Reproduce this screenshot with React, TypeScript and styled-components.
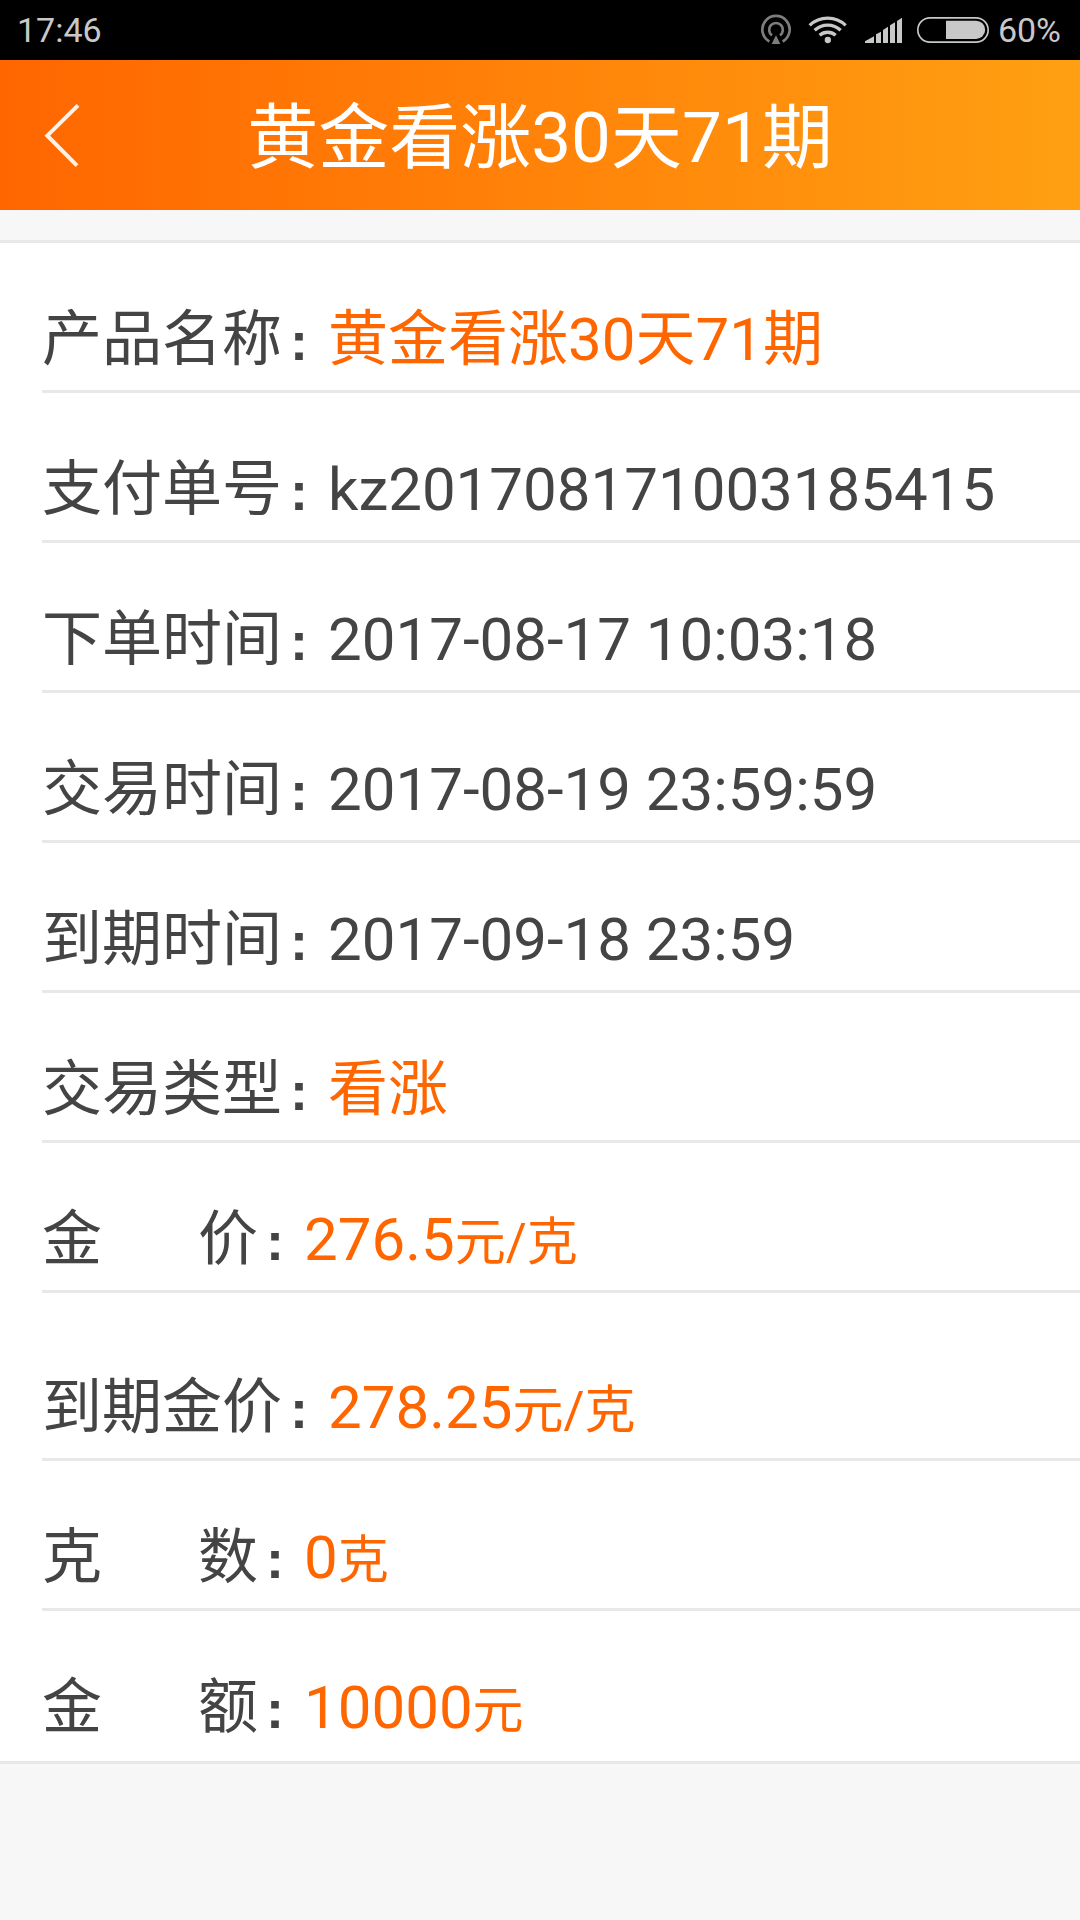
import React from "react";
import styled, { createGlobalStyle } from "styled-components";

const GlobalStyle = createGlobalStyle`
  body {
    margin: 0;
    background: #f7f7f7;
    font-family: Roboto, "Noto Sans CJK SC", sans-serif;
  }
`;

const Page = styled.div`
  min-height: 100vh;
  background: #f7f7f7;
`;

const StatusBar = styled.div`
  display: flex;
  align-items: center;
  justify-content: space-between;
  height: 60px;
  padding: 0 19px 0 17px;
  background: #000;
  color: #c8c8c8;
  font-size: 34px;
  line-height: 60px;
`;

const StatusIcons = styled.div`
  display: flex;
  align-items: center;
  gap: 14px;
`;

const Battery = styled.div`
  display: flex;
  align-items: center;
  gap: 8px;
`;

const Header = styled.header`
  display: grid;
  grid-template-columns: 1fr auto 1fr;
  align-items: center;
  height: 150px;
  background: linear-gradient(90deg, #ff6600, #ffa012);
`;

const BackButton = styled.button`
  display: flex;
  justify-self: start;
  margin-left: 42px;
  padding: 0;
  border: 0;
  background: none;
  cursor: pointer;
`;

const Title = styled.h1`
  margin: 0;
  padding-top: 6px;
  color: #fff;
  font-size: 71px;
  font-weight: 400;
  line-height: 90px;
  white-space: nowrap;
`;

const Details = styled.dl`
  margin: 30px 0 0;
  border-top: 3px solid #e8e8e8;
  border-bottom: 3px solid #e8e8e8;
  background: #fff;
`;

const Row = styled.div<{ $spaced?: boolean }>`
  display: flex;
  align-items: baseline;
  margin-left: 42px;
  padding: ${(p) => (p.$spaced ? 70 : 52)}px 0 5px;
  border-bottom: 3px solid #e8e8e8;
  font-size: 60px;
  line-height: 90px;
  white-space: nowrap;

  &:last-child {
    border-bottom-color: transparent;
  }
`;

const Term = styled.dt`
  display: flex;
  align-items: baseline;
  color: #444;
`;

const Label = styled.span<{ $short: boolean }>`
  display: flex;
  justify-content: space-between;
  width: ${(p) => (p.$short ? 216 : 240)}px;
`;

const Colon = styled.span`
  box-sizing: border-box;
  width: 46px;
  padding-left: 8px;
  font-family: "Liberation Sans", sans-serif;
  font-size: 54px;
  font-weight: 700;
  line-height: 60px;
`;

const Value = styled.dd<{ $accent?: boolean }>`
  margin: 0;
  color: ${(p) => (p.$accent ? "#ff6600" : "#444")};
`;

const Unit = styled.span`
  font-size: 51px;
  line-height: 60px;
`;

interface Detail {
  label: string;
  value: string;
  unit?: string;
  accent?: boolean;
  spaced?: boolean;
}

const details: Detail[] = [
  { label: "产品名称", value: "黄金看涨30天71期", accent: true },
  { label: "支付单号", value: "kz201708171003185415" },
  { label: "下单时间", value: "2017-08-17 10:03:18" },
  { label: "交易时间", value: "2017-08-19 23:59:59" },
  { label: "到期时间", value: "2017-09-18 23:59" },
  { label: "交易类型", value: "看涨", accent: true },
  { label: "金价", value: "276.5", unit: "元/克", accent: true },
  { label: "到期金价", value: "278.25", unit: "元/克", accent: true, spaced: true },
  { label: "克数", value: "0", unit: "克", accent: true },
  { label: "金额", value: "10000", unit: "元", accent: true },
];

const HotspotIcon = () => (
  <svg width="34" height="30" viewBox="120 45 102 90" fill="none" stroke="#7d7d7d" strokeWidth="8" overflow="visible" aria-hidden="true">
    <path d="M148 124.500A41 41 0 1 1 188 124.500" />
    <path d="M156 106A20.500 20.500 0 1 1 180 106" />
    <path d="M168 106L181 132H155Z" fill="#7d7d7d" stroke="none" />
  </svg>
);

const WifiIcon = () => (
  <svg width="40" height="30" viewBox="264 45 120 90" fill="none" stroke="#c8c8c8" strokeWidth="10" aria-hidden="true">
    <path d="M269 76A78 78 0 0 1 377 76" />
    <path d="M284 91A57 57 0 0 1 362 91" />
    <path d="M299 106A36 36 0 0 1 347 106" />
    <circle cx="323.500" cy="120" r="9.500" fill="#c8c8c8" stroke="none" />
  </svg>
);

const SignalIcon = () => (
  <svg width="40" height="30" viewBox="426 45 120 90" fill="#c8c8c8" overflow="visible" aria-hidden="true">
    <path d="M435 129V124L462 109V129Z" />
    <path d="M468 129V103L483 95V129Z" />
    <path d="M489 129V90L504 80V129Z" />
    <path d="M510 129V76L525 67V129Z" />
    <path d="M531 129V63L546 53V129Z" />
  </svg>
);

const BatteryIcon = () => (
  <svg width="74" height="30" viewBox="588 45 222 90" fill="none" aria-hidden="true">
    <rect x="593.500" y="53.500" width="211" height="73" rx="36.500" stroke="#c8c8c8" strokeWidth="5" />
    <path d="M678 62H768A27.500 27.500 0 0 1 768 117H678Z" fill="#c8c8c8" />
  </svg>
);

const BackIcon = () => (
  <svg width="40" height="72" viewBox="126 297 120 216" fill="none" aria-hidden="true">
    <path d="M234 316L142 407L231 497" stroke="#fff2e4" strokeWidth="12" />
  </svg>
);

function DetailRow({ label, value, unit, accent, spaced }: Detail) {
  const short = label.length === 2;
  return (
    <Row $spaced={spaced}>
      <Term>
        <Label $short={short}>
          {short ? label.split("").map((char) => <span key={char}>{char}</span>) : label}
        </Label>
        <Colon>:</Colon>
      </Term>
      <Value $accent={accent}>
        {value}
        {unit && <Unit>{unit}</Unit>}
      </Value>
    </Row>
  );
}

export default function App() {
  return (
    <Page>
      <GlobalStyle />
      <StatusBar>
        <span>17:46</span>
        <StatusIcons>
          <HotspotIcon />
          <WifiIcon />
          <SignalIcon />
          <Battery>
            <BatteryIcon />
            <span>60%</span>
          </Battery>
        </StatusIcons>
      </StatusBar>
      <Header>
        <BackButton type="button" aria-label="返回">
          <BackIcon />
        </BackButton>
        <Title>黄金看涨30天71期</Title>
      </Header>
      <main>
        <Details>
          {details.map((detail) => (
            <DetailRow key={detail.label} {...detail} />
          ))}
        </Details>
      </main>
    </Page>
  );
}
